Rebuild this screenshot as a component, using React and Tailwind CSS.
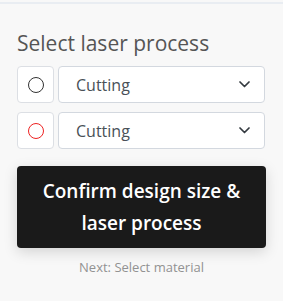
export default function App() {
  const rows = [
    { color: "#333333" },
    { color: "#ee2222" },
  ];
  return (
    <div className="w-[283px] h-[301px] bg-[#f8f8f8] font-['Open_Sans',sans-serif] overflow-hidden">
      <div className="h-[2px]" />
      <div className="h-[2px] bg-[#e9edf2]" />
      <div className="px-[17px] pt-[25px]">
        <div className="text-[21px] leading-[28px] text-[#555555]">Select laser process</div>
        <div className="mt-[9px] flex flex-col gap-[9px] pr-[1px]">
          {rows.map((r, i) => (
            <div key={i} className="flex gap-[4px] h-[37px]">
              <div className="w-[37px] h-[37px] bg-white border border-[#dcdfe4] rounded-[4px] flex items-center justify-center">
                <div className="w-[16px] h-[16px] rounded-full border-[1.5px]" style={{ borderColor: r.color }} />
              </div>
              <div className="flex-1 bg-white border border-[#d3d8df] rounded-[4px] flex items-center justify-between pl-[17px] pr-[14px]">
                <span className="text-[16px] text-[#495057]">Cutting</span>
                <svg width="11" height="7" viewBox="0 0 11 7" fill="none">
                  <path d="M1 1L5.5 5.5L10 1" stroke="#343a40" strokeWidth="1.7" strokeLinecap="round" strokeLinejoin="round" />
                </svg>
              </div>
            </div>
          ))}
        </div>
        <button className="mt-[17px] w-[249px] h-[82px] bg-[#1a1a1a] rounded-[4px] text-white font-semibold text-[19px] leading-[32px] shadow-[0_4px_14px_rgba(0,0,0,0.15)] flex items-center justify-center text-center px-4">
          Confirm design size &amp; laser process
        </button>
        <div className="mt-[9px] text-center text-[13px] leading-[20px] text-[#929292]">Next: Select material</div>
      </div>
    </div>
  );
}
